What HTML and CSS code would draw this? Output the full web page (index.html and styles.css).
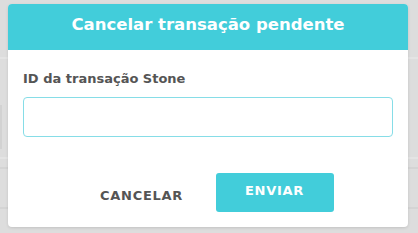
FILE: index.html
```html
<!DOCTYPE html>
<html lang="pt-BR">
<head>
<meta charset="utf-8">
<title>Cancelar transação pendente</title>
<link rel="stylesheet" href="styles.css">
</head>
<body>
<div class="backdrop">
  <div class="bg-row bg-top"></div>
  <div class="bg-row bg-mid"><div class="bg-box"></div></div>
  <div class="bg-row bg-line1"></div>
  <div class="bg-row bg-line2"></div>
</div>
<div class="modal">
  <div class="modal-header">Cancelar transação pendente</div>
  <div class="modal-body">
    <label class="field-label" for="tid">ID da transação Stone</label>
    <input class="field-input" id="tid" type="text">
    <div class="actions">
      <button class="btn btn-cancel" type="button">CANCELAR</button>
      <button class="btn btn-send" type="button">ENVIAR</button>
    </div>
  </div>
</div>
</body>
</html>
```
FILE: styles.css
```css
html, body {
  margin: 0;
  padding: 0;
}
body {
  width: 418px;
  height: 233px;
  overflow: hidden;
  background: #dddddd;
  position: relative;
  font-family: "DejaVu Sans", "Open Sans", sans-serif;
}
.backdrop {
  display: flex;
  flex-direction: column;
}
.bg-row {
  border-bottom: 2px solid #e4e4e4;
}
.bg-top {
  height: 57px;
}
.bg-mid {
  height: 100px;
  padding-top: 46px;
  box-sizing: border-box;
}
.bg-box {
  width: 2px;
  height: 44px;
  background: #d2d2d2;
}
.bg-line1 {
  height: 8px;
  border-bottom-color: #d4d4d4;
}
.bg-line2 {
  height: 38px;
  border-bottom-color: #d4d4d4;
}
.modal {
  position: absolute;
  left: 8px;
  top: 4px;
  width: 400px;
  height: 223px;
  background: #ffffff;
  border-radius: 4px;
  box-shadow: 0 1px 3px rgba(0, 0, 0, 0.12);
  overflow: hidden;
  display: flex;
  flex-direction: column;
}
.modal-header {
  height: 46px;
  background: #42cdda;
  color: #ffffff;
  font-weight: 700;
  font-size: 16.5px;
  line-height: 42px;
  text-align: center;
}
.modal-body {
  padding: 20px 15px 15px 15px;
  display: flex;
  flex-direction: column;
}
.field-label {
  font-size: 13px;
  line-height: 17px;
  font-weight: 700;
  color: #555555;
}
.field-input {
  margin-top: 10px;
  height: 40px;
  box-sizing: border-box;
  border: 1.5px solid #86dde7;
  border-radius: 4px;
  outline: none;
  padding: 0 10px;
  font-family: inherit;
}
.actions {
  margin-top: 36px;
  display: flex;
  justify-content: center;
  gap: 15px;
}
.btn {
  width: 118px;
  height: 39px;
  border: none;
  border-radius: 3px;
  font-family: inherit;
  font-weight: 700;
  font-size: 13px;
  letter-spacing: 0.7px;
  padding: 0 0 4px 0;
  cursor: pointer;
}
.btn-cancel {
  background: transparent;
  color: #555555;
  padding-top: 6px;
  padding-bottom: 0;
}
.btn-send {
  background: #42cdda;
  color: #ffffff;
}
```
